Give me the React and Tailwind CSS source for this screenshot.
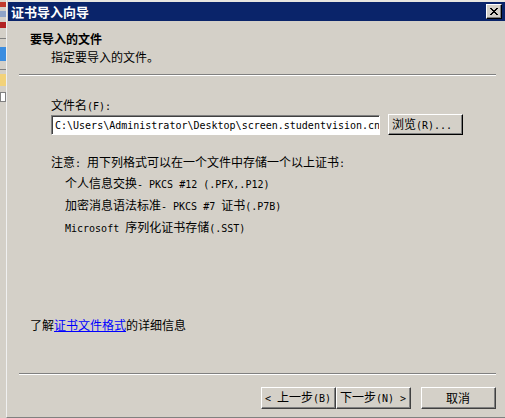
// Certificate Import Wizard - file selection page (classic Windows look)

const CN = { fontFamily: '"Noto Sans CJK SC", "DejaVu Sans", sans-serif' };
const MONO = { fontFamily: '"DejaVu Sans Mono", "Liberation Mono", "Noto Sans CJK SC", monospace' };

// Latin runs in the classic dialog font are fixed width
const Mono = ({ children }) => (
  <span className="text-[10px] leading-none" style={MONO}>
    {children}
  </span>
);

// Classic 3D raised button
const ClassicButton = ({ children, className = "", dark = false }) => (
  <div
    className={`flex border-t border-l border-white border-b border-r ${dark ? "border-b-black border-r-black" : "border-b-[#404040] border-r-[#404040]"} ${className}`}
  >
    <div className="flex flex-1 items-center justify-center border-b border-r border-[#808080] bg-[#d4d0c8] text-[12px] leading-none text-black">
      {children}
    </div>
  </div>
);

const Separator = () => (
  <div className="flex flex-col">
    <div className="h-px bg-[#808080]" />
    <div className="h-px bg-white" />
  </div>
);

const Line = ({ children, className = "" }) => (
  <div className={`h-[14px] whitespace-pre text-[12px] leading-[14px] text-black ${className}`}>
    {children}
  </div>
);

export default function App() {
  return (
    <div
      className="flex h-[418px] w-[505px] overflow-hidden bg-[#d4d0c8]"
      style={CN}
    >
      {/* Window behind the dialog */}
      <div className="flex w-[6px] flex-col bg-[#d4d0c8]">
        <div className="mt-[2px] h-[5px] bg-[#c0392b]" />
        <div className="mt-[4px] h-[6px] bg-[#8fa4c8]" />
        <div className="mt-[5px] h-[6px] bg-[#b22222]" />
        <div className="mt-[10px] h-px bg-[#808080]" />
        <div className="mt-[8px] h-[14px] bg-[#3b8de0]" />
        <div className="mt-[8px] h-px bg-[#808080]" />
        <div className="mt-[4px] h-[12px] bg-[#f2d27a]" />
        <div className="mt-[6px] h-[10px] border border-[#808080] bg-white" />
        <div className="flex-1" />
      </div>

      {/* Dialog */}
      <div className="flex flex-1 flex-col border-l border-l-[#f0f0f0] border-b border-b-[#808080] pl-px">
        <div className="h-[2px] bg-[#e8e6e0]" />
        {/* Title bar */}
        <div className="flex h-[19px] items-center justify-between bg-[#0a246a] pl-[3px] pr-[3px]">
          <span className="text-[13px] font-bold leading-none text-white">
            证书导入向导
          </span>
          <ClassicButton dark className="h-[15px] w-[16px]">
            <svg width="8" height="7" viewBox="0 0 8 7">
              <path
                d="M0 0h2v1h1v1h2V1h1V0h2v1H7v1H6v1H5v1h1v1h1v1h1v1H6V6H5V5H3v1H2v1H0V6h1V5h1V4h1V3H2V2H1V1H0z"
                fill="#000"
              />
            </svg>
          </ClassicButton>
        </div>

        {/* Header */}
        <div className="flex flex-col pl-[22px] pt-[11px]">
          <Line className="font-bold">要导入的文件</Line>
          <Line className="mt-[4px] pl-[21px]">指定要导入的文件。</Line>
        </div>
        <div className="mt-[10px] pl-[11px] pr-[9px]">
          <Separator />
        </div>

        {/* Body */}
        <div className="flex flex-1 flex-col pl-[43px]">
          <Line className="mt-[22px]">
            文件名<Mono>(F):</Mono>
          </Line>
          <div className="mt-[2px] flex items-center">
            <div className="flex h-[20px] w-[329px] border-t border-l border-[#808080] border-b-white border-r-white border-b border-r">
              <div
                className="flex flex-1 items-center overflow-hidden whitespace-nowrap border-t border-l border-[#404040] bg-white pl-[2px] text-[10px] text-black"
                style={MONO}
              >
                C:\Users\Administrator\Desktop\screen.studentvision.cn
              </div>
            </div>
            <ClassicButton dark className="ml-[8px] h-[21px] w-[75px]">
              <span className="-ml-[6px] whitespace-pre">
                浏览<Mono>(R)...</Mono>
              </span>
            </ClassicButton>
          </div>

          <Line className="mt-[20px]">
            注意<Mono>: </Mono>用下列格式可以在一个文件中存储一个以上证书<Mono>:</Mono>
          </Line>
          <div className="flex flex-col pl-[14px]">
            <Line className="mt-[7px]">
              个人信息交换<Mono>- PKCS #12 (.PFX,.P12)</Mono>
            </Line>
            <Line className="mt-[8px]">
              加密消息语法标准<Mono>- PKCS #7 </Mono>证书<Mono>(.P7B)</Mono>
            </Line>
            <Line className="mt-[8px]">
              <Mono>Microsoft </Mono>序列化证书存储<Mono>(.SST)</Mono>
            </Line>
          </div>

          <Line className="mt-[84px] -ml-[21px]">
            了解
            <span className="text-[#0000ff] underline">证书文件格式</span>
            的详细信息
          </Line>
        </div>

        {/* Footer */}
        <div className="pl-[11px] pr-[9px]">
          <Separator />
        </div>
        <div className="flex items-center justify-end pb-[8px] pr-[9px] pt-[12px]">
          <ClassicButton className="h-[22px] w-[75px]">
            <span className="whitespace-pre">
              <Mono>&lt; </Mono>上一步<Mono>(B)</Mono>
            </span>
          </ClassicButton>
          <ClassicButton className="h-[22px] w-[75px]">
            <span className="whitespace-pre">
              下一步<Mono>(N) &gt;</Mono>
            </span>
          </ClassicButton>
          <ClassicButton className="ml-[10px] h-[22px] w-[75px]">
            取消
          </ClassicButton>
        </div>
      </div>
    </div>
  );
}
